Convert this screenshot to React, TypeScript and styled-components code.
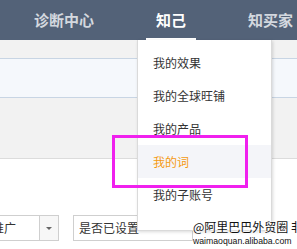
import React from 'react';
import styled, { createGlobalStyle } from 'styled-components';

const GlobalStyle = createGlobalStyle`
    body {
        margin: 0;
        background: #fff;
        font-family: "Noto Sans CJK SC", "Noto Sans", sans-serif;
    }
`

const Page = styled.div`
    position: relative;
    width: 297px;
    height: 249px;
    overflow: hidden;
    background: #fff;
`

const Header = styled.div`
    display: flex;
    gap: 42px;
    height: 40px;
    padding-left: 24px;
    background: #536278;
    white-space: nowrap;
`

const NavItem = styled.div<{ active?: boolean }>`
    box-sizing: border-box;
    height: 40px;
    padding: 0 10px;
    line-height: 40px;
    font-size: 15px;
    font-weight: bold;
    color: ${props => props.active ? '#fff' : '#d3d8df'};
    border-bottom: 2px solid ${props => props.active ? '#fff' : 'transparent'};
`

const Band = styled.div<{ h: number; bg: string; line: string }>`
    height: ${props => props.h}px;
    background: ${props => props.bg};
    border-bottom: 1px solid ${props => props.line};
`

const FilterRow = styled.div`
    display: flex;
    gap: 14px;
    margin: 56px 0 0 -14px;
`

const Select = styled.div<{ w: number }>`
    box-sizing: border-box;
    display: flex;
    width: ${props => props.w}px;
    height: 26px;
    border: 1px solid #cfcfcf;
    background: #fff;
    font-size: 12px;
    color: #333;
`

const SelectText = styled.div`
    flex: 1;
    padding-left: 5px;
    line-height: 24px;
    white-space: nowrap;
    overflow: hidden;
`

const SelectArrow = styled.div`
    display: flex;
    align-items: center;
    justify-content: center;
    width: 18px;
    border-left: 1px solid #cfcfcf;
    background: #f7f7f7;
    &::after {
        content: '';
        border-left: 3px solid transparent;
        border-right: 3px solid transparent;
        border-top: 3px solid #666;
    }
`

const Menu = styled.ul`
    position: absolute;
    left: 137px;
    top: 40px;
    box-sizing: border-box;
    width: 135px;
    height: 191px;
    margin: 0;
    padding: 6px 0 0;
    list-style: none;
    background: #fff;
    border: 1px solid #dadada;
    border-top: none;
    box-shadow: 1px 1px 3px rgba(0, 0, 0, 0.15);
`

const MenuItem = styled.li<{ active?: boolean }>`
    height: 33px;
    padding-left: 15px;
    line-height: 33px;
    font-size: 12px;
    color: ${props => props.active ? '#f49a12' : '#333'};
    background: ${props => props.active ? '#f4f5f9' : 'transparent'};
`

const Marker = styled.div`
    position: absolute;
    left: 112px;
    top: 135px;
    box-sizing: border-box;
    width: 136px;
    height: 53px;
    border: 3px solid #f020ee;
`

const Watermark = styled.div`
    position: absolute;
    left: 193px;
    top: 219px;
    color: #111;
    white-space: nowrap;
    text-shadow: 0 0 2px #fff, 0 0 2px #fff, 0 0 2px #fff;
`

const WatermarkTitle = styled.div`
    font-size: 12px;
    line-height: 15px;
`

const WatermarkUrl = styled.div`
    margin-top: 2px;
    font-family: "Liberation Sans", Arial, sans-serif;
    font-size: 8.7px;
    line-height: 11px;
`

const navItems = ['诊断中心', '知己', '知买家']
const menuItems = ['我的效果', '我的全球旺铺', '我的产品', '我的词', '我的子账号']

export default function App() {
    return (
        <Page>
            <GlobalStyle />
            <Header>
                {navItems.map(item => (
                    <NavItem key={item} active={item === '知己'}>{item}</NavItem>
                ))}
            </Header>
            <Band h={18} bg="#f2f2f2" line="#c8d5e4" />
            <Band h={38} bg="#f5f8fc" line="#c8d5e4" />
            <Band h={60} bg="#f2f2f2" line="#dcdcdc" />
            <FilterRow>
                <Select w={73}>
                    <SelectText>推广</SelectText>
                    <SelectArrow />
                </Select>
                <Select w={120}>
                    <SelectText>是否已设置</SelectText>
                </Select>
            </FilterRow>
            <Menu>
                {menuItems.map(item => (
                    <MenuItem key={item} active={item === '我的词'}>{item}</MenuItem>
                ))}
            </Menu>
            <Marker />
            <Watermark>
                <WatermarkTitle>@阿里巴巴外贸圈 非</WatermarkTitle>
                <WatermarkUrl>waimaoquan.alibaba.com</WatermarkUrl>
            </Watermark>
        </Page>
    )
}
